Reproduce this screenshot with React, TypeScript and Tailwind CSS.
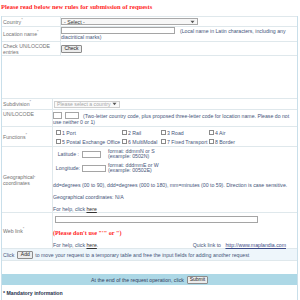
import React from 'react'

// tiny scaled-down request form
const Req = () => <sup className="text-[4px] leading-none text-[#8a8a8a]">*</sup>

const Check = ({ label }: { label: string }) => (
  <div className="flex items-center gap-[1px] whitespace-nowrap">
    <span className="inline-block w-[5px] h-[5px] border border-[#8a8a8a] bg-white" />
    <span>{label}</span>
  </div>
)

const Btn = ({ children, className }: { children: React.ReactNode; className: string }) => (
  <span className={`inline-flex items-center justify-center h-[8px] border border-[#8c8c8c] bg-[#ececec] rounded-[1px] text-[#222] text-[5px] leading-none ${className}`}>
    {children}
  </span>
)

const Arrow = () => (
  <svg width="5" height="4" viewBox="0 0 5 4" className="shrink-0">
    <path d="M0.5 0.8 L4.5 0.8 L2.5 3.2 Z" fill="#555" />
  </svg>
)

export default function App() {
  return (
    <div className="w-[300px] h-[300px] overflow-hidden bg-white font-['Liberation_Sans',Arial,sans-serif] text-[5.2px] leading-[6px] text-[#46557a]">
      <h1 className="h-[14px] pl-[1px] pt-[3px] font-['Liberation_Serif','Times_New_Roman',serif] font-bold text-[6.5px] leading-[8px] text-[#ff1f1f] whitespace-nowrap">
        Please read below new rules for submission of requests
      </h1>

      <div className="ml-[1px] w-[297px] h-[286px] border-x border-[#c9dfea]">
        {/* upper table */}
        <div className="mt-[2px] border-t border-[#dfe8ec]">
          <div className="flex h-[10px] border-b border-[#dfe8ec]">
            <div className="w-[59px] shrink-0 border-r border-[#dfe8ec] pl-[1px] flex items-center text-[#737373]">
              Country<Req />
            </div>
            <div className="flex items-center">
              <div className="w-[137px] h-[7px] border border-[#a9a9a9] bg-[#f7f7f7] flex items-center justify-between px-[2px] text-[#333]">
                <span>- Select -</span>
                <Arrow />
              </div>
            </div>
          </div>

          <div className="flex h-[15px] border-b border-[#dfe8ec]">
            <div className="w-[59px] shrink-0 border-r border-[#dfe8ec] pl-[1px] flex items-center text-[#737373]">
              Location name<Req />
            </div>
            <div className="flex flex-col">
              <div className="flex items-center h-[7px] gap-[5px] whitespace-nowrap">
                <span className="w-[114px] h-[7px] border border-[#a5a5a5] bg-white" />
                <span>(Local name in Latin characters, including any</span>
              </div>
              <div>diactritical marks)</div>
            </div>
          </div>

          <div className="flex h-[14px] border-b border-[#dfe8ec]">
            <div className="w-[59px] shrink-0 border-r border-[#dfe8ec] pl-[1px] flex items-center text-[#737373]">
              Check UN/LOCODE<br />entries
            </div>
            <div className="flex items-center">
              <Btn className="w-[21px]">Check</Btn>
            </div>
          </div>

          <div className="h-[43px] border-b border-[#dfe8ec]" />
        </div>

        {/* lower table */}
        <div className="flex h-[11px] border-b border-[#dfe8ec]">
          <div className="w-[51px] shrink-0 border-r border-[#dfe8ec] pl-[1px] flex items-center text-[#737373]">
            Subdivision<Req />
          </div>
          <div className="flex items-center pl-[1px]">
            <div className="w-[66px] h-[7px] border border-[#cfcfcf] bg-[#fafafa] flex items-center justify-between px-[2px] text-[#a8a8a8]">
              <span>Please select a country</span>
              <Arrow />
            </div>
          </div>
        </div>

        <div className="flex h-[17px] border-b border-[#dfe8ec]">
          <div className="w-[51px] shrink-0 border-r border-[#dfe8ec] pl-[1px] pt-[1px] text-[#737373]">UN/LOCODE</div>
          <div className="flex flex-col pt-[2px]">
            <div className="flex items-center h-[7px] whitespace-nowrap">
              <span className="w-[9px] h-[7px] border border-[#a5a5a5] bg-white" />
              <span className="ml-[3px] w-[14px] h-[7px] border border-[#a5a5a5] bg-white" />
              <span className="ml-[4px]">(Two-letter country code, plus proposed three-letter code for location name. Please do not</span>
            </div>
            <div>use neither 0 or 1)</div>
          </div>
        </div>

        <div className="flex h-[20px] border-b border-[#dfe8ec]">
          <div className="w-[51px] shrink-0 border-r border-[#dfe8ec] pl-[1px] flex items-center text-[#737373]">
            Functions<Req />
          </div>
          <div className="grid grid-cols-[66px_39px_48px_60px] auto-rows-[9px] items-center pl-[3px] pt-[1px]">
            <Check label="1 Port" />
            <Check label="2 Rail" />
            <Check label="3 Road" />
            <Check label="4 Air" />
            <Check label="5 Postal Exchange Office" />
            <Check label="6 MultiModal" />
            <Check label="7 Fixed Transport" />
            <Check label="8 Border" />
          </div>
        </div>

        <div className="flex h-[66px] border-b border-[#dfe8ec]">
          <div className="w-[51px] shrink-0 border-r border-[#dfe8ec] pl-[1px] flex items-center text-[#737373]">
            Geographical<br />coordinates<Req />
          </div>
          <div className="flex flex-col pt-[2px] whitespace-nowrap">
            <div className="grid grid-cols-[29px_26px_auto] items-center leading-[5px]">
              <div className="text-right pr-[3px]">Latitude :</div>
              <span className="w-[19px] h-[7px] border border-[#a5a5a5] bg-white" />
              <div>format: ddmmN or S<br />(example: 0502N)</div>
            </div>
            <div className="mt-[4px] grid grid-cols-[29px_26px_auto] items-center leading-[5px]">
              <div className="text-right pr-[2px]">Longitude:</div>
              <span className="w-[24px] h-[7px] border border-[#a5a5a5] bg-white" />
              <div>format: dddmmE or W<br />(example: 00502E)</div>
            </div>
            <div className="mt-[9px]">dd=degrees (00 to 90), ddd=degrees (000 to 180), mm=minutes (00 to 59). Direction is case sensitive.</div>
            <div className="mt-[6px]">Geographical coordinates: N/A</div>
            <div className="mt-[6px]">
              For help, click <span className="underline text-[#333]">here</span>
            </div>
          </div>
        </div>

        <div className="flex h-[36px] border-b border-[#dfe8ec]">
          <div className="w-[51px] shrink-0 border-r border-[#dfe8ec] pl-[1px] flex items-center text-[#737373]">
            Web link<Req />
          </div>
          <div className="flex flex-col flex-1 pt-[3px] pr-[11px] whitespace-nowrap">
            <span className="ml-[2px] w-[203px] h-[7px] border border-[#a5a5a5] bg-white" />
            <div className="mt-[6px] h-[8px] leading-[8px] font-['Liberation_Serif','Times_New_Roman',serif] font-bold text-[6.2px] text-[#ff1f1f]">
              (Please don't use "'" or ")
            </div>
            <div className="mt-[5px] flex justify-between">
              <span>
                For help, click <span className="underline text-[#333]">here</span>.
              </span>
              <span>
                Quick link to <span className="ml-[3px] underline text-[#3b4a86]">http://www.maplandia.com</span>
              </span>
            </div>
          </div>
        </div>

        <div className="flex items-center h-[12px] border-b border-[#dfe8ec] bg-[#eef6fb] pl-[1px] whitespace-nowrap">
          <span>Click</span>
          <Btn className="ml-[3px] w-[16px] h-[7px]">Add</Btn>
          <span className="ml-[2px]">to move your request to a temporary table and free the input fields for adding another request</span>
        </div>

        <div className="mt-[13px] h-[11px] bg-[#add8e6] flex items-center justify-center gap-[3px] text-[#33415e] whitespace-nowrap">
          <span>At the end of the request operation, click</span>
          <Btn className="w-[21px] h-[7px]">Submit</Btn>
        </div>

        <div className="mt-[5px] pl-[1px] font-bold text-[#26304a]">* Mandatory information</div>
      </div>
    </div>
  )
}
